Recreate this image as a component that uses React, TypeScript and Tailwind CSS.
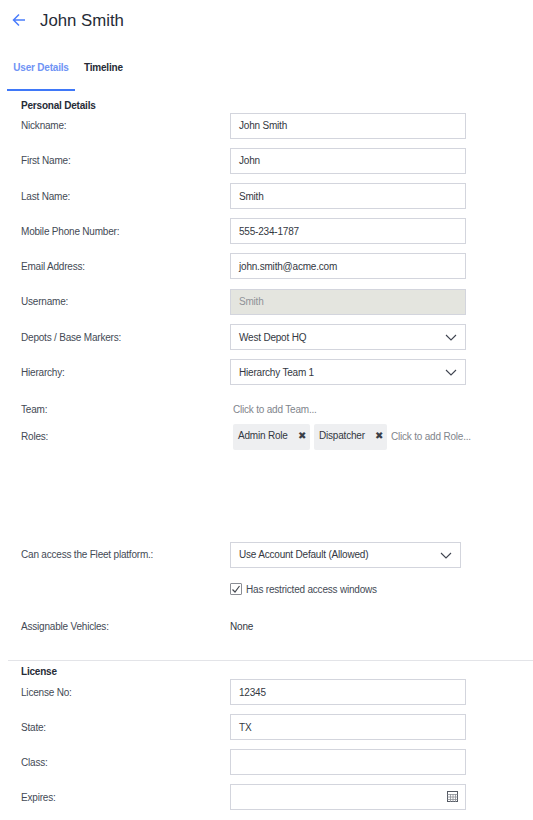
import React from "react";

const Chevron = () => (
  <svg width="12" height="7" viewBox="0 0 12 7" fill="none" className="absolute right-[8px] top-[9px]">
    <path d="M1 1 6 6l5-5" stroke="#3f4450" strokeWidth="1.1" />
  </svg>
);

const Box = ({ children, cls = "" }: { children?: React.ReactNode; cls?: string }) => (
  <div className={"relative flex h-[26px] w-[236px] items-center border border-[#d3d5dd] bg-white pl-[8px] text-[#333842] " + cls}>
    {children}
  </div>
);

const Row = ({ label, up, children }: { label: string; up?: boolean; children?: React.ReactNode }) => (
  <div className="flex h-[26px] items-center">
    <div className={up ? "w-[209px] pb-[2px] text-[#444a55]" : "w-[209px] text-[#444a55]"}>{label}</div>
    {children}
  </div>
);

const Chip = ({ text, w }: { text: string; w: string }) => (
  <div className={"flex h-[26px] items-center justify-between rounded-[2px] bg-[#eeeff1] pb-[3px] pl-[5px] pr-[4px] text-[#333842] " + w}>
    <span>{text}</span>
    <span className="text-[10px] leading-[12px] text-[#3b3f48]">✖</span>
  </div>
);

export default function App() {
  return (
    <div className="h-[820px] w-[533px] overflow-hidden bg-white font-['Liberation_Sans',sans-serif] text-[10px] tracking-[-0.2px]">
      <div className="flex h-[40px] items-center pl-[12px]">
        <svg width="14" height="14" viewBox="0 0 14 14" fill="none">
          <path d="M13 7H1.5M7 1.5 1.5 7 7 12.5" stroke="#4a7dfc" strokeWidth="1.5" />
        </svg>
        <span className="ml-[14px] pt-[1px] text-[16.8px] tracking-normal text-[#262b36]">John Smith</span>
      </div>
      <div className="flex h-[51px] pl-[7px] font-bold">
        <div className="flex w-[68px] items-center justify-center border-b-2 border-[#3f78f8] pt-[5px] text-[#6f93f5]">User Details</div>
        <div className="flex items-center pl-[9px] pt-[3px] text-[#262b36]">Timeline</div>
      </div>
      <div className="px-[21px] pt-[7px]">
        <div className="h-[15px] font-bold text-[#262b36]">Personal Details</div>
        <div className="flex flex-col gap-[9px]">
          <Row label="Nickname:" up><Box cls="pb-[2px]">John Smith</Box></Row>
          <Row label="First Name:" up><Box cls="pb-[2px]">John</Box></Row>
          <Row label="Last Name:"><Box>Smith</Box></Row>
          <Row label="Mobile Phone Number:"><Box>555-234-1787</Box></Row>
          <Row label="Email Address:"><Box>john.smith@acme.com</Box></Row>
          <div className="mt-[1px]"><Row label="Username:" up><Box cls="!bg-[#e4e5df] pb-[2px] !text-[#8f9298]">Smith</Box></Row></div>
          <Row label="Depots / Base Markers:"><Box>West Depot HQ<Chevron /></Box></Row>
          <Row label="Hierarchy:"><Box>Hierarchy Team 1<Chevron /></Box></Row>
        </div>
        <div className="mt-[14px] flex h-[20px] items-center">
          <div className="w-[212px] text-[#444a55]">Team:</div>
          <div className="text-[#81858c]">Click to add Team...</div>
        </div>
        <div className="mt-[5px] flex items-start">
          <div className="flex h-[24px] w-[212px] items-center text-[#444a55]">Roles:</div>
          <div className="flex items-start gap-[4px]">
            <Chip text="Admin Role" w="w-[77px]" />
            <Chip text="Dispatcher" w="w-[73px]" />
            <span className="mt-[5px] whitespace-nowrap text-[#81858c]">Click to add Role...</span>
          </div>
        </div>
        <div className="mt-[92px]">
          <Row label="Can access the Fleet platform.:" up><Box cls="!w-[231px] pb-[2px]">Use Account Default (Allowed)<Chevron /></Box></Row>
        </div>
        <div className="mt-[11px] flex h-[20px] items-center pl-[209px]">
          <div className="flex h-[12px] w-[12px] items-center justify-center rounded-[1px] border border-[#8a8d94] bg-white">
            <svg width="10" height="10" viewBox="0 0 10 10" fill="none"><path d="M1.5 5.5 4 8l4.5-6" stroke="#44484f" strokeWidth="1.2" /></svg>
          </div>
          <span className="ml-[4px] text-[#444a55]">Has restricted access windows</span>
        </div>
        <div className="mt-[17px] flex h-[20px] items-center">
          <div className="w-[209px] text-[#444a55]">Assignable Vehicles:</div>
          <div className="text-[#333842]">None</div>
        </div>
      </div>
      <div className="ml-[8px] mt-[24px] border-t border-[#e3e4e8] px-[13px] pt-[3px]">
        <div className="h-[15px] font-bold text-[#262b36]">License</div>
        <div className="flex flex-col gap-[9px]">
          <Row label="License No:"><Box>12345</Box></Row>
          <Row label="State:"><Box>TX</Box></Row>
          <Row label="Class:"><Box /></Row>
          <Row label="Expires:">
            <Box>
              <svg width="11" height="11" viewBox="0 0 11 11" fill="none" className="absolute right-[7px] top-[6px]">
                <rect x="0.5" y="0.5" width="10" height="10" stroke="#555a64" />
                <path d="M0.5 3.5h10M0.5 6h10M0.5 8.5h10M3.5 3v8M6 3v8M8.5 3v8" stroke="#8d9097" strokeWidth="0.8" />
              </svg>
            </Box>
          </Row>
        </div>
      </div>
    </div>
  );
}
